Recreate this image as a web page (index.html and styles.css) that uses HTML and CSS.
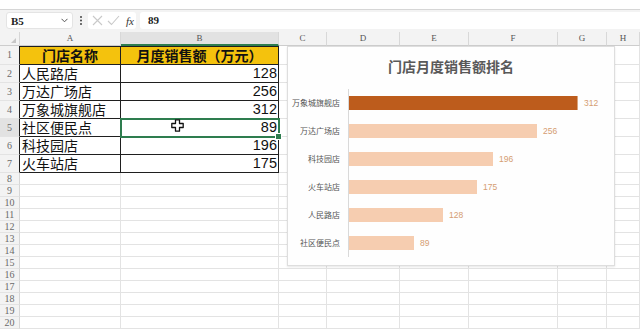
FILE: index.html
```html
<!DOCTYPE html>
<html lang="zh-CN">
<head>
    <meta charset="UTF-8">
    <meta name="viewport" content="width=device-width, initial-scale=1.0">
    <title>门店月度销售额</title>
    <link rel="stylesheet" href="styles.css">
</head>
<body>
    <div class="ribbon"></div>

    <div class="fbar">
        <div class="namebox">
            <span>B5</span>
            <svg width="7" height="5" viewBox="0 0 7 5"><path d="M0.5 0.8 L3.5 3.8 L6.5 0.8" fill="none" stroke="#555" stroke-width="1"/></svg>
        </div>
        <div class="more">
            <svg width="2" height="9" viewBox="0 0 2 9"><circle cx="1" cy="1" r="1" fill="#444"/><circle cx="1" cy="4.5" r="1" fill="#444"/><circle cx="1" cy="8" r="1" fill="#444"/></svg>
        </div>
        <div class="tools">
            <svg width="11" height="11" viewBox="0 0 11 11"><path d="M1 1 L10 10 M10 1 L1 10" stroke="#c9c9c9" stroke-width="1.1"/></svg>
            <svg width="13" height="11" viewBox="0 0 13 11"><path d="M1 6 L4.5 9.5 L12 1" fill="none" stroke="#c9c9c9" stroke-width="1.1"/></svg>
            <span class="fx">fx</span>
        </div>
        <div class="formula">89</div>
    </div>

    <div class="sheet">
        <div class="row head">
            <b class="corner"></b><i>A</i><i class="on">B</i><i>C</i><i>D</i><i>E</i><i>F</i><i>G</i><i>H</i>
        </div>

        <div class="row tb first">
            <b>1</b><i class="t th">门店名称</i><i class="t th">月度销售额（万元）</i><i></i><i></i><i></i><i></i><i></i><i></i>
        </div>
        <div class="row tb">
            <b>2</b><i class="t">人民路店</i><i class="t n">128</i><i></i><i></i><i></i><i></i><i></i><i></i>
        </div>
        <div class="row tb">
            <b>3</b><i class="t">万达广场店</i><i class="t n">256</i><i></i><i></i><i></i><i></i><i></i><i></i>
        </div>
        <div class="row tb">
            <b>4</b><i class="t">万象城旗舰店</i><i class="t n">312</i><i></i><i></i><i></i><i></i><i></i><i></i>
        </div>
        <div class="row tb">
            <b class="on">5</b><i class="t">社区便民点</i><i class="t n sel">89</i><i></i><i></i><i></i><i></i><i></i><i></i>
        </div>
        <div class="row tb">
            <b>6</b><i class="t">科技园店</i><i class="t n">196</i><i></i><i></i><i></i><i></i><i></i><i></i>
        </div>
        <div class="row tb">
            <b>7</b><i class="t">火车站店</i><i class="t n">175</i><i></i><i></i><i></i><i></i><i></i><i></i>
        </div>

        <div class="row sm"><b>8</b><i></i><i></i><i></i><i></i><i></i><i></i><i></i><i></i></div>
        <div class="row sm"><b>9</b><i></i><i></i><i></i><i></i><i></i><i></i><i></i><i></i></div>
        <div class="row sm"><b>10</b><i></i><i></i><i></i><i></i><i></i><i></i><i></i><i></i></div>
        <div class="row sm"><b>11</b><i></i><i></i><i></i><i></i><i></i><i></i><i></i><i></i></div>
        <div class="row sm"><b>12</b><i></i><i></i><i></i><i></i><i></i><i></i><i></i><i></i></div>
        <div class="row sm"><b>13</b><i></i><i></i><i></i><i></i><i></i><i></i><i></i><i></i></div>
        <div class="row sm"><b>14</b><i></i><i></i><i></i><i></i><i></i><i></i><i></i><i></i></div>
        <div class="row sm"><b>15</b><i></i><i></i><i></i><i></i><i></i><i></i><i></i><i></i></div>
        <div class="row sm"><b>16</b><i></i><i></i><i></i><i></i><i></i><i></i><i></i><i></i></div>
        <div class="row sm"><b>17</b><i></i><i></i><i></i><i></i><i></i><i></i><i></i><i></i></div>
        <div class="row sm"><b>18</b><i></i><i></i><i></i><i></i><i></i><i></i><i></i><i></i></div>
        <div class="row sm"><b>19</b><i></i><i></i><i></i><i></i><i></i><i></i><i></i><i></i></div>
        <div class="row sm"><b>20</b><i></i><i></i><i></i><i></i><i></i><i></i><i></i><i></i></div>

        <!-- 鼠标指针 -->
        <svg class="cursor" width="13" height="13" viewBox="0 0 13 13">
            <path d="M4.5 0.8 H8.5 V4.5 H12.2 V8.5 H8.5 V12.2 H4.5 V8.5 H0.8 V4.5 H4.5 Z" fill="#fff" stroke="#111" stroke-width="1.3" stroke-linejoin="round"/>
        </svg>

        <!-- 条形图 -->
        <div class="chart">
            <h2>门店月度销售额排名</h2>
            <div class="plot">
                <div class="bar-row">
                    <span class="cat">万象城旗舰店</span>
                    <div class="track"><div class="bar hi" style="width:229px"></div><span class="val">312</span></div>
                </div>
                <div class="bar-row">
                    <span class="cat">万达广场店</span>
                    <div class="track"><div class="bar" style="width:188px"></div><span class="val">256</span></div>
                </div>
                <div class="bar-row">
                    <span class="cat">科技园店</span>
                    <div class="track"><div class="bar" style="width:144px"></div><span class="val">196</span></div>
                </div>
                <div class="bar-row">
                    <span class="cat">火车站店</span>
                    <div class="track"><div class="bar" style="width:128px"></div><span class="val">175</span></div>
                </div>
                <div class="bar-row">
                    <span class="cat">人民路店</span>
                    <div class="track"><div class="bar" style="width:94px"></div><span class="val">128</span></div>
                </div>
                <div class="bar-row">
                    <span class="cat">社区便民点</span>
                    <div class="track"><div class="bar" style="width:65px"></div><span class="val">89</span></div>
                </div>
            </div>
        </div>
    </div>
</body>
</html>
```

FILE: styles.css
```css
* {
    margin:0;
    padding:0;
    box-sizing: border-box;
}
body {
    width: 640px;
    height:329px;
    overflow: hidden;
    background: #fff;
    font-family: "Liberation Sans", "Noto Sans CJK SC", sans-serif;
}

/* 顶部功能区 */
.ribbon {
    height:10px;
    border-bottom: 1px solid #d6d6d6;
}

/* 编辑栏 */
.fbar {
    height:22px;
    background: #f3f3f3;
    display: flex;
    flex-direction: row;
    align-items: flex-start;
    padding:2px 0 0 6px;
}
.namebox {
    width: 67px;
    height:17px;
    background: #fff;
    border:1px solid #e4e4e4;
    border-radius: 3px;
    display: flex;
    justify-content: space-between;
    align-items: center;
    padding:0 4px 0 4px;
    font: bold 11px "Liberation Serif", serif;
    color:#222;
}
.more {
    width: 15px;
    height:17px;
    display: flex;
    justify-content: center;
    align-items: center;
}
.tools {
    width: 48px;
    height:17px;
    background: #fff;
    border-radius: 3px;
    display: flex;
    align-items: center;
    gap:4px;
    padding-left: 4px;
}
.fx {
    font: italic 11px "Liberation Serif", serif;
    color:#333;
    margin-left: 2px;
}
.formula {
    flex: 1;
    height:17px;
    margin-left: 4px;
    background: #fff;
    border-radius: 3px 0 0 3px;
    padding-left: 8px;
    font: bold 11px/17px "Liberation Serif", serif;
    color:#222;
}

/* 表格 */
.sheet {
    position: relative;
}
.row {
    display: grid;
    grid-template-columns: 20px 101px 158px 48px 73px 69px 89px 49px 1fr;
    height:18px;
}
.row > * {
    font-style: normal;
    font-weight: normal;
    border-right: 1px solid #e3e3e3;
    border-bottom: 1px solid #e3e3e3;
    white-space: nowrap;
    overflow: hidden;
}
.row b {
    background: #f3f3f3;
    border-right-color: #d6d6d6;
    border-bottom-color: #e3e3e3;
    font: 10px/17px "Liberation Serif", serif;
    color:#6a6a6a;
    text-align: center;
}
.row b.on {
    background: #e2e2e2;
}
.row.head {
    height:14px;
}
.row.head i {
    background: #f3f3f3;
    border-right-color: #d8d8d8;
    border-bottom-color: #cdcdcd;
    font: 9px/13px "Liberation Serif", serif;
    color:#555;
    text-align: center;
}
.row.head i.on {
    background: #e2e2e2;
    border-bottom: 2px solid #2e7d4f;
}
.corner {
    position: relative;
    border-bottom-color: #cdcdcd !important;
}
.corner::after {
    content: "";
    position: absolute;
    right:3px;
    bottom:2px;
    border-left: 5px solid transparent;
    border-bottom: 5px solid #c6c6c6;
}
.row.first {
    height:19px;
}
.row.tb b {
    border-right-color: #1f1f1f;
}
.row.first b {
    line-height: 18px;
}
.t {
    border-right-color: #1f1f1f !important;
    border-bottom-color: #1f1f1f !important;
    font-size: 14px;
    line-height: 17px;
    font-family: "Noto Sans CJK SC", sans-serif;
    color:#111;
    padding-left: 2px;
}
.row.first .t {
    border-top: 1px solid #1f1f1f;
}
.th {
    background: #f4c20d;
    font-weight: bold !important;
    text-align: center;
    padding-left: 0;
}
.n {
    font-family: "Liberation Sans", sans-serif;
    font-size: 14.5px;
    text-align: right;
    padding-right: 1px;
}
.sel {
    position: relative;
    overflow: visible;
    outline: 2px solid #2e7d4f;
    outline-offset: -1px;
}
.sel::after {
    content: "";
    position: absolute;
    right:-4px;
    bottom:-4px;
    width: 5px;
    height:5px;
    background: #2e7d4f;
    border:1px solid #fff;
}
.row.sm {
    height:12px;
}
.row.sm b {
    font-size: 10px;
    line-height: 11px;
}

.cursor {
    position: absolute;
    left:171px;
    top:87px;
}

/* 图表 */
.chart {
    position: absolute;
    left:287px;
    top:14px;
    width: 328px;
    height:220px;
    background: #fefefe;
    border:1px solid #dedede;
    box-shadow: 0 1px 2px rgba(0,0,0,0.1);
}
.chart h2 {
    padding-top: 10px;
    font: bold 14px/18px "Noto Sans CJK SC", sans-serif;
    color:#595959;
    text-align: center;
}
.plot {
    margin-top: 14px;
}
.bar-row {
    height:28px;
    display: flex;
    flex-direction: row;
    align-items: stretch;
}
.cat {
    width: 52px;
    font: 8px/28px "Noto Sans CJK SC", sans-serif;
    color:#555;
    text-align: right;
    white-space: nowrap;
}
.track {
    margin-left: 8px;
    border-left: 1px solid #d9d9d9;
    display: flex;
    align-items: center;
    flex: 1;
}
.bar {
    height:14px;
    background: #f6cdb0;
}
.bar.hi {
    background: #bd5c1c;
    border-right: 1px solid #d9a47c;
}
.val {
    margin-left: 6px;
    font-size: 8.5px;
    color:#d59d72;
}
```
